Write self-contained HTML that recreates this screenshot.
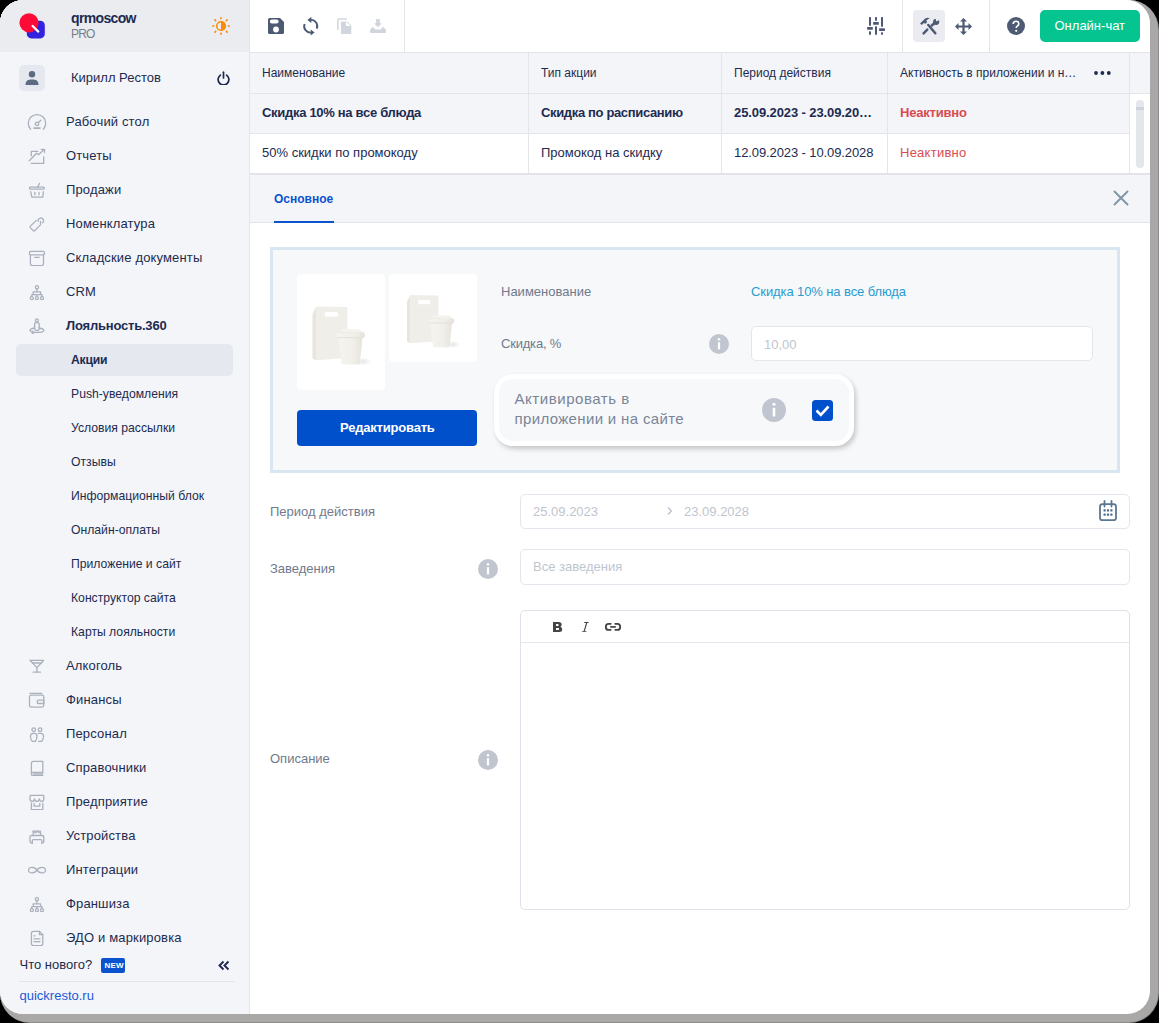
<!DOCTYPE html>
<html><head><meta charset="utf-8">
<style>
*{box-sizing:border-box;margin:0;padding:0}
html,body{width:1159px;height:1023px;overflow:hidden;background:#000;font-family:"Liberation Sans",sans-serif;color:#1c2b4f}
.abs{position:absolute}
.t{position:absolute;white-space:nowrap;line-height:1}
#shadow{position:absolute;left:0;top:0;width:1159px;height:1023px;border-radius:24px 30px 30px 30px;background:#8e8c8c}
#shadow2{position:absolute;left:0;top:0;width:1158px;height:1022px;border-radius:23px 29px 29px 29px;background:#aaa7a7}
#win{position:absolute;left:0;top:0;width:1150px;height:1014px;border-radius:23px 24px 23px 23px;overflow:hidden;background:#fff}
</style></head><body>
<div id="shadow"></div>
<div id="shadow2"></div>
<div id="win">
<div class="abs" style="left:0px;top:0px;width:249px;height:1014px;background:#f4f5f9;"></div>
<div class="abs" style="left:249px;top:0px;width:1px;height:1014px;background:#e3e5ea;"></div>
<div class="abs" style="left:0px;top:0px;width:249px;height:52px;background:#ebecf0;"></div>
<svg class="abs" style="left:17px;top:11px;" width="30" height="30" viewBox="0 0 30 30"><rect x="9.8" y="9.7" width="18" height="17.7" rx="4.5" fill="#3423de"/><circle cx="12" cy="11.8" r="9.6" fill="#ff0b38"/><line x1="15.6" y1="15" x2="21.3" y2="20.6" stroke="#fff" stroke-width="2.2" stroke-linecap="round"/></svg>
<div class="t" style="left:71px;top:11.15px;font-size:14px;font-weight:700;color:#1c2b4f;letter-spacing:-0.65px;">qrmoscow</div>
<div class="t" style="left:71px;top:27.84px;font-size:12px;color:#767d8b;letter-spacing:-0.8px;">PRO</div>
<svg class="abs" style="left:211px;top:16px;" width="20" height="20" viewBox="0 0 20 20"><g stroke="#fb8a0a" stroke-width="1.6" stroke-linecap="round"><line x1="10.00" y1="2.80" x2="10.00" y2="1.80"/><line x1="15.37" y1="4.63" x2="16.08" y2="3.92"/><line x1="17.20" y1="10.00" x2="18.20" y2="10.00"/><line x1="15.37" y1="15.37" x2="16.08" y2="16.08"/><line x1="10.00" y1="17.20" x2="10.00" y2="18.20"/><line x1="4.63" y1="15.37" x2="3.92" y2="16.08"/><line x1="2.80" y1="10.00" x2="1.80" y2="10.00"/><line x1="4.63" y1="4.63" x2="3.92" y2="3.92"/></g><circle cx="10" cy="10" r="4.3" fill="none" stroke="#fb8a0a" stroke-width="1.5"/><path d="M10 5.2 A4.8 4.8 0 0 1 10 14.8 Z" fill="#fb8a0a"/></svg>
<div class="abs" style="left:19px;top:65px;width:26px;height:26px;background:#e5e8ef;border-radius:5px;"></div>
<svg class="abs" style="left:19px;top:65px;" width="26" height="26" viewBox="0 0 26 26"><circle cx="13" cy="9.2" r="3.2" fill="#5c6a82"/><path d="M6.5 20 C6.5 15.5 9 14.5 13 14.5 C17 14.5 19.5 15.5 19.5 20 Z" fill="#5c6a82"/></svg>
<div class="t" style="left:71px;top:71.00px;font-size:13px;color:#1c2b4f;">Кирилл Рестов</div>
<svg class="abs" style="left:215px;top:69px;" width="16" height="16" viewBox="0 0 16 16"><path d="M5.4 6.1 A5.4 5.4 0 1 0 11.6 6.1" fill="none" stroke="#1c2b4f" stroke-width="1.7" stroke-linecap="round"/><line x1="8.5" y1="3.2" x2="8.5" y2="9" stroke="#1c2b4f" stroke-width="1.7" stroke-linecap="round"/></svg>
<div class="abs" style="left:16px;top:344px;width:217px;height:32px;background:#e5e8ef;border-radius:5px;"></div>
<svg class="abs" style="left:27px;top:110px;" width="20" height="20" viewBox="0 0 20 20"><g fill="none" stroke="#aab1bd" stroke-width="1.3" stroke-linecap="round" stroke-linejoin="round"><path d="M3.6 19.2 A8.7 8.7 0 1 1 16.4 19.2"/><circle cx="10" cy="13.9" r="1.7"/><line x1="11.2" y1="12.7" x2="13.8" y2="10.2"/><line x1="6.9" y1="18.1" x2="13" y2="18.1" stroke-width="1.6"/></g></svg>
<div class="t" style="left:66px;top:115.00px;font-size:13px;color:#1c2b4f;letter-spacing:0.15px;">Рабочий стол</div>
<svg class="abs" style="left:27px;top:144px;" width="20" height="20" viewBox="0 0 20 20"><g fill="none" stroke="#aab1bd" stroke-width="1.3" stroke-linecap="round" stroke-linejoin="round"><path d="M4.3 11.8 V7.4 H10.8"/><path d="M2.3 16.7 L9.6 9.2 L11.7 10.6 L17.2 5.6"/><path d="M14.3 5.3 H17.5 V8.6"/><path d="M4.3 19.4 H16.7 V13"/></g></svg>
<div class="t" style="left:66px;top:149.00px;font-size:13px;color:#1c2b4f;letter-spacing:0.15px;">Отчеты</div>
<svg class="abs" style="left:27px;top:178px;" width="20" height="20" viewBox="0 0 20 20"><g fill="none" stroke="#aab1bd" stroke-width="1.3" stroke-linecap="round" stroke-linejoin="round"><path d="M12.6 5.4 L10.5 9.2"/><rect x="2.6" y="9.2" width="14.6" height="2" rx="0.8"/><path d="M3.7 13.6 L4.9 19.2 H15.8 L16.4 13.6"/><path d="M7.9 14.3 V16.8 M12 14.3 V16.8"/></g></svg>
<div class="t" style="left:66px;top:183.00px;font-size:13px;color:#1c2b4f;letter-spacing:0.15px;">Продажи</div>
<svg class="abs" style="left:27px;top:212px;" width="20" height="20" viewBox="0 0 20 20"><g fill="none" stroke="#aab1bd" stroke-width="1.3" stroke-linecap="round" stroke-linejoin="round"><path d="M9.2 8.4 L3.2 14.4 Q2.6 15 3.2 15.6 L6.4 18.8 Q7 19.4 7.6 18.8 L13.5 12.9 V9.4"/><path d="M11.2 9.3 A2.7 2.7 0 1 1 15.6 10.8"/></g></svg>
<div class="t" style="left:66px;top:217.00px;font-size:13px;color:#1c2b4f;letter-spacing:0.15px;">Номенклатура</div>
<svg class="abs" style="left:27px;top:246px;" width="20" height="20" viewBox="0 0 20 20"><g fill="none" stroke="#aab1bd" stroke-width="1.3" stroke-linecap="round" stroke-linejoin="round"><rect x="2.5" y="5.4" width="14.9" height="3.4" rx="1"/><path d="M3.4 9 V17.6 Q3.4 19.6 5.4 19.6 H14.5 Q16.5 19.6 16.5 17.6 V9"/><path d="M7.6 11.3 H12.2"/></g></svg>
<div class="t" style="left:66px;top:251.00px;font-size:13px;color:#1c2b4f;letter-spacing:0.15px;">Складские документы</div>
<svg class="abs" style="left:27px;top:280px;" width="20" height="20" viewBox="0 0 20 20"><g fill="none" stroke="#aab1bd" stroke-width="1.3" stroke-linecap="round" stroke-linejoin="round"><circle cx="9.9" cy="7.2" r="1.6"/><path d="M9.9 8.8 V11.8"/><path d="M6.2 14.6 V11.8 H13.6 V14.6"/><path d="M4.8 16.6 V14.6 H15 V16.6 M9.9 14.6 V16.6"/><circle cx="4.8" cy="18.2" r="1.5"/><circle cx="9.9" cy="18.2" r="1.5"/><circle cx="15" cy="18.2" r="1.5"/></g></svg>
<div class="t" style="left:66px;top:285.00px;font-size:13px;color:#1c2b4f;letter-spacing:0.15px;">CRM</div>
<svg class="abs" style="left:27px;top:314px;" width="20" height="20" viewBox="0 0 20 20"><g fill="none" stroke="#aab1bd" stroke-width="1.3" stroke-linecap="round" stroke-linejoin="round"><circle cx="9.9" cy="6.3" r="1.5"/><rect x="7.6" y="8.6" width="4.6" height="7.8" rx="1.6"/><path d="M7.6 14 Q3 14.8 3 16.5 Q3 18.4 9.9 18.4 Q16.8 18.4 16.8 16.5 Q16.8 14.8 12.2 14"/><path d="M5.2 17.2 L6.8 18.5 L5.2 19.8"/></g></svg>
<div class="t" style="left:66px;top:319.00px;font-size:13px;font-weight:700;color:#1c2b4f;letter-spacing:-0.2px;">Лояльность.360</div>
<div class="t" style="left:71px;top:353.67px;font-size:12.2px;font-weight:700;color:#1c2b4f;letter-spacing:-0.25px;">Акции</div>
<div class="t" style="left:71px;top:387.67px;font-size:12.2px;color:#1c2b4f;">Push-уведомления</div>
<div class="t" style="left:71px;top:421.67px;font-size:12.2px;color:#1c2b4f;">Условия рассылки</div>
<div class="t" style="left:71px;top:455.67px;font-size:12.2px;color:#1c2b4f;">Отзывы</div>
<div class="t" style="left:71px;top:489.67px;font-size:12.2px;color:#1c2b4f;">Информационный блок</div>
<div class="t" style="left:71px;top:523.67px;font-size:12.2px;color:#1c2b4f;">Онлайн-оплаты</div>
<div class="t" style="left:71px;top:557.67px;font-size:12.2px;color:#1c2b4f;">Приложение и сайт</div>
<div class="t" style="left:71px;top:591.67px;font-size:12.2px;color:#1c2b4f;">Конструктор сайта</div>
<div class="t" style="left:71px;top:625.67px;font-size:12.2px;color:#1c2b4f;">Карты лояльности</div>
<svg class="abs" style="left:27px;top:654px;" width="20" height="20" viewBox="0 0 20 20"><g fill="none" stroke="#aab1bd" stroke-width="1.3" stroke-linecap="round" stroke-linejoin="round"><path d="M3 6.3 H16.8 L9.9 13.6 Z"/><path d="M5.4 9 H14.4"/><path d="M9.9 13.6 V18"/><path d="M6.2 18.2 H13.5"/></g></svg>
<div class="t" style="left:66px;top:659.00px;font-size:13px;color:#1c2b4f;letter-spacing:0.15px;">Алкоголь</div>
<svg class="abs" style="left:27px;top:688px;" width="20" height="20" viewBox="0 0 20 20"><g fill="none" stroke="#aab1bd" stroke-width="1.3" stroke-linecap="round" stroke-linejoin="round"><path d="M3 5.4 H14.9"/><rect x="2.5" y="7.2" width="14.3" height="11.9" rx="1.8"/><rect x="10.3" y="12.2" width="6.5" height="3.3" rx="1"/></g></svg>
<div class="t" style="left:66px;top:693.00px;font-size:13px;color:#1c2b4f;letter-spacing:0.15px;">Финансы</div>
<svg class="abs" style="left:27px;top:722px;" width="20" height="20" viewBox="0 0 20 20"><g fill="none" stroke="#aab1bd" stroke-width="1.3" stroke-linecap="round" stroke-linejoin="round"><circle cx="6.7" cy="7.7" r="1.8"/><circle cx="13.1" cy="7.7" r="1.8"/><path d="M5.2 19.3 Q3.4 17.2 3.4 14.5 Q3.4 11.3 6.2 11.3 H7.4 Q10 11.3 10 14 Q10 17.2 8.4 19.3 Z"/><path d="M11.3 11.3 H13.6 Q16.6 11.3 16.6 14.2 Q16.6 17.3 14.7 19.3 H11.6"/></g></svg>
<div class="t" style="left:66px;top:727.00px;font-size:13px;color:#1c2b4f;letter-spacing:0.15px;">Персонал</div>
<svg class="abs" style="left:27px;top:756px;" width="20" height="20" viewBox="0 0 20 20"><g fill="none" stroke="#aab1bd" stroke-width="1.3" stroke-linecap="round" stroke-linejoin="round"><path d="M4.4 17.8 V7.4 Q4.4 5.4 6.4 5.4 H15.8 V16.4 H6 Q4.4 16.4 4.4 18 Q4.4 19.6 6 19.6 H15.8"/><path d="M6.4 18 H15.8"/></g></svg>
<div class="t" style="left:66px;top:761.00px;font-size:13px;color:#1c2b4f;letter-spacing:0.15px;">Справочники</div>
<svg class="abs" style="left:27px;top:790px;" width="20" height="20" viewBox="0 0 20 20"><g fill="none" stroke="#aab1bd" stroke-width="1.3" stroke-linecap="round" stroke-linejoin="round"><path d="M3.4 5.4 H16.6 L16.9 8.5 Q16.9 11.3 14.8 11.3 Q12.5 11.3 12.3 8.8 Q12 11.3 9.9 11.3 Q7.8 11.3 7.5 8.8 Q7.2 11.3 5 11.3 Q2.9 11.3 2.9 8.5 Z"/><path d="M4.4 13.2 V19.6 H15.8 V13.2"/><path d="M7 13.5 V16.2 H12.8 V13.5"/></g></svg>
<div class="t" style="left:66px;top:795.00px;font-size:13px;color:#1c2b4f;letter-spacing:0.15px;">Предприятие</div>
<svg class="abs" style="left:27px;top:824px;" width="20" height="20" viewBox="0 0 20 20"><g fill="none" stroke="#aab1bd" stroke-width="1.3" stroke-linecap="round" stroke-linejoin="round"><path d="M6.2 10.8 V7.2 H13.5 V10.8"/><path d="M6.2 7.4 L8.5 8.6 L10.4 7.4 L12.2 8.6"/><rect x="3" y="11.5" width="13.8" height="7.4" rx="1.5"/><rect x="5.3" y="15.6" width="9.6" height="6" rx="1" fill="#f4f5f9"/></g></svg>
<div class="t" style="left:66px;top:829.00px;font-size:13px;color:#1c2b4f;letter-spacing:0.15px;">Устройства</div>
<svg class="abs" style="left:27px;top:858px;" width="20" height="20" viewBox="0 0 20 20"><g fill="none" stroke="#aab1bd" stroke-width="1.3" stroke-linecap="round" stroke-linejoin="round"><path d="M10 12.2 C8 8.8 1.5 8.3 1.5 12.2 C1.5 16 8 15.6 10 12.2 C12 8.8 18.5 8.3 18.5 12.2 C18.5 16 12 15.6 10 12.2 Z"/></g></svg>
<div class="t" style="left:66px;top:863.00px;font-size:13px;color:#1c2b4f;letter-spacing:0.15px;">Интеграции</div>
<svg class="abs" style="left:27px;top:892px;" width="20" height="20" viewBox="0 0 20 20"><g fill="none" stroke="#aab1bd" stroke-width="1.3" stroke-linecap="round" stroke-linejoin="round"><circle cx="9.9" cy="7.2" r="1.6"/><path d="M9.9 8.8 V11.8"/><path d="M6.2 14.6 V11.8 H13.6 V14.6"/><path d="M4.8 16.6 V14.6 H15 V16.6 M9.9 14.6 V16.6"/><circle cx="4.8" cy="18.2" r="1.5"/><circle cx="9.9" cy="18.2" r="1.5"/><circle cx="15" cy="18.2" r="1.5"/></g></svg>
<div class="t" style="left:66px;top:897.00px;font-size:13px;color:#1c2b4f;letter-spacing:0.15px;">Франшиза</div>
<svg class="abs" style="left:27px;top:926px;" width="20" height="20" viewBox="0 0 20 20"><g fill="none" stroke="#aab1bd" stroke-width="1.3" stroke-linecap="round" stroke-linejoin="round"><path d="M6.4 5.4 H12.5 L15.8 8.7 V17.6 Q15.8 19.6 13.8 19.6 H6.4 Q4.4 19.6 4.4 17.6 V7.4 Q4.4 5.4 6.4 5.4 Z"/><path d="M12.5 5.4 V8.7 H15.8"/><path d="M6.8 9.8 H8"/><path d="M6.8 12.8 H13"/><path d="M6.8 15.6 H13"/></g></svg>
<div class="t" style="left:66px;top:931.00px;font-size:13px;color:#1c2b4f;letter-spacing:0.15px;">ЭДО и маркировка</div>
<div class="t" style="left:19.5px;top:958.00px;font-size:13px;color:#1c2b4f;">Что нового?</div>
<div class="abs" style="left:101px;top:958px;width:24px;height:15px;background:#0b52cf;border-radius:2px;"></div>
<div class="t" style="left:104.5px;top:962.23px;font-size:8px;font-weight:700;color:#fff;letter-spacing:0.2px;">NEW</div>
<svg class="abs" style="left:217px;top:960px;" width="14" height="11" viewBox="0 0 14 11"><path d="M6.5 1.5 L2.5 5.5 L6.5 9.5 M11.5 1.5 L7.5 5.5 L11.5 9.5" fill="none" stroke="#1c2b4f" stroke-width="1.9"/></svg>
<div class="abs" style="left:19px;top:981px;width:216px;height:1px;background:#e3e5ea;"></div>
<div class="t" style="left:19.5px;top:989.00px;font-size:13px;color:#1b5bd8;">quickresto.ru</div>
<div class="abs" style="left:250px;top:0px;width:900px;height:52px;background:#fff;"></div>
<div class="abs" style="left:250px;top:52px;width:900px;height:1px;background:#e3e5ea;"></div>
<div class="abs" style="left:404px;top:0px;width:1px;height:52px;background:#e3e5ea;"></div>
<div class="abs" style="left:902px;top:0px;width:1px;height:52px;background:#e3e5ea;"></div>
<div class="abs" style="left:989px;top:0px;width:1px;height:52px;background:#e3e5ea;"></div>
<svg class="abs" style="left:268px;top:18px;" width="16" height="16" viewBox="0 0 16 16"><path d="M1.5 0 H12 L16 4 V14.5 Q16 16 14.5 16 H1.5 Q0 16 0 14.5 V1.5 Q0 0 1.5 0 Z" fill="#4d5a74"/><rect x="1.9" y="1.5" width="8.7" height="3.9" rx="1.9" fill="#fff"/><circle cx="8" cy="11.5" r="2.9" fill="#fff"/></svg>
<svg class="abs" style="left:302px;top:16px;" width="18" height="20" viewBox="0 0 18 20"><g fill="none" stroke="#4d5a74" stroke-width="1.9"><path d="M8.6 3.9 A6.3 6.3 0 0 1 14.8 12.6"/><path d="M2.6 8.0 A6.3 6.3 0 0 0 9.4 16.5"/></g><path d="M5.4 3.9 L9.3 0.8 L9.3 7 Z" fill="#4d5a74"/><path d="M12.6 16.5 L8.7 13.4 L8.7 19.6 Z" fill="#4d5a74"/></svg>
<svg class="abs" style="left:337px;top:18px;" width="16" height="16" viewBox="0 0 16 16"><path d="M0.9 12 V1.8 Q0.9 0.9 1.8 0.9 H10" fill="none" stroke="#d0d5de" stroke-width="1.5"/><path d="M5 3.4 H10.2 L14.3 7.5 V15 Q14.3 16 13.3 16 H4.9 Q3.9 16 3.9 15 V4.4 Q3.9 3.4 5 3.4 Z" fill="#d0d5de"/><path d="M9 3.4 V8 H13.6 Z" fill="#fff"/></svg>
<svg class="abs" style="left:370px;top:18px;" width="16" height="16" viewBox="0 0 16 16"><path d="M6.1 0.9 H9.8 V5.3 H11.8 L7.95 9.2 L4.1 5.3 H6.1 Z" fill="#d0d5de"/><path d="M0 12 L2.4 9.3 H3.4 L5.2 11.6 H10.8 L12.6 9.3 H13.6 L16 12 V14 Q16 15 15 15 H1 Q0 15 0 14 Z" fill="#d0d5de"/></svg>
<svg class="abs" style="left:867px;top:17px;" width="18" height="18" viewBox="0 0 18 18"><g fill="#4d5a74"><rect x="2" y="0" width="2" height="8.7" rx="0.5"/><rect x="2" y="14.2" width="2" height="3.6" rx="0.5"/><rect x="0.1" y="10" width="5.7" height="2.8" rx="0.5"/><rect x="8" y="0" width="2" height="3.8" rx="0.5"/><rect x="8" y="9.2" width="2" height="8.6" rx="0.5"/><rect x="6.1" y="5.1" width="5.7" height="2.7" rx="0.5"/><rect x="14" y="0" width="2" height="9.8" rx="0.5"/><rect x="14" y="15.3" width="2" height="2.5" rx="0.5"/><rect x="12.1" y="11.2" width="5.8" height="2.7" rx="0.5"/></g></svg>
<div class="abs" style="left:913px;top:10px;width:32px;height:32px;background:#ebecf1;border-radius:4px;"></div>
<svg class="abs" style="left:919px;top:17px;" width="22" height="19" viewBox="0 0 22 19"><defs><mask id="wm"><rect x="0" y="0" width="22" height="19" fill="#fff"/><path d="M17.3 4.6 L16.2 0 L20.5 0 L21.5 2.5 Z" fill="#000"/></mask></defs><g fill="#4d5a74"><path d="M1.1 6.6 L2.7 8 L4.8 6.1 L6.6 6.7 L8.1 5 L7.2 3.8 Q9 2 10.8 1.3 Q8.5 0.3 6.2 1.5 Z"/><circle cx="17.2" cy="4.8" r="3.1" mask="url(#wm)"/></g><g stroke="#4d5a74" stroke-width="2.5" stroke-linecap="round"><line x1="9.3" y1="8" x2="16.3" y2="16.3"/><line x1="8.3" y1="12.6" x2="4.6" y2="16.4"/><line x1="12.8" y1="8.5" x2="16.2" y2="5.5"/></g></svg>
<svg class="abs" style="left:955px;top:18px;" width="17" height="17" viewBox="0 0 17 17"><g fill="#4d5a74"><path d="M8.5 0 L12 3.5 H9.6 V7.4 H13.5 V5 L17 8.5 L13.5 12 V9.6 H9.6 V13.5 H12 L8.5 17 L5 13.5 H7.4 V9.6 H3.5 V12 L0 8.5 L3.5 5 V7.4 H7.4 V3.5 H5 Z"/></g></svg>
<svg class="abs" style="left:1007px;top:17px;" width="18" height="18" viewBox="0 0 18 18"><circle cx="9" cy="9" r="9" fill="#4f5b75"/><path d="M6.2 7 Q6.2 4.2 9 4.2 Q11.8 4.2 11.8 6.8 Q11.8 8.2 10.4 9 Q9.2 9.7 9.2 11" fill="none" stroke="#fff" stroke-width="1.6"/><circle cx="9.2" cy="13.8" r="1.1" fill="#fff"/></svg>
<div class="abs" style="left:1040px;top:10px;width:100px;height:32px;background:#06c48f;border-radius:5px;"></div>
<div class="t" style="left:1054.5px;top:19.00px;font-size:13px;color:#fff;">Онлайн-чат</div>
<div class="abs" style="left:250px;top:53px;width:900px;height:40px;background:#f4f5f9;"></div>
<div class="abs" style="left:250px;top:93px;width:900px;height:1px;background:#e3e5ea;"></div>
<div class="abs" style="left:250px;top:94px;width:879px;height:39px;background:#f4f5f9;"></div>
<div class="abs" style="left:250px;top:133px;width:879px;height:1px;background:#e3e5ea;"></div>
<div class="abs" style="left:250px;top:134px;width:879px;height:39px;background:#fff;"></div>
<div class="abs" style="left:1129px;top:94px;width:21px;height:79px;background:#fff;"></div>
<div class="abs" style="left:250px;top:173px;width:900px;height:2px;background:#e3e4e8;"></div>
<div class="abs" style="left:528px;top:53px;width:1px;height:120px;background:#e3e5ea;"></div>
<div class="abs" style="left:721px;top:53px;width:1px;height:120px;background:#e3e5ea;"></div>
<div class="abs" style="left:887px;top:53px;width:1px;height:120px;background:#e3e5ea;"></div>
<div class="abs" style="left:1129px;top:53px;width:1px;height:120px;background:#e3e5ea;"></div>
<div class="t" style="left:262px;top:66.84px;font-size:12px;color:#1c2b4f;">Наименование</div>
<div class="t" style="left:541px;top:66.84px;font-size:12px;color:#1c2b4f;">Тип акции</div>
<div class="t" style="left:734px;top:66.84px;font-size:12px;color:#1c2b4f;">Период действия</div>
<div class="t" style="left:900px;top:66.84px;font-size:12px;color:#1c2b4f;">Активность в приложении и н…</div>
<svg class="abs" style="left:1094px;top:69px;" width="18" height="8" viewBox="0 0 18 8"><g fill="#1c2b4f"><circle cx="2" cy="4" r="1.9"/><circle cx="8.4" cy="4" r="1.9"/><circle cx="14.8" cy="4" r="1.9"/></g></svg>
<div class="abs" style="left:1136px;top:100px;width:8px;height:68px;background:#e3e6eb;border-radius:4px;"></div>
<div class="abs" style="left:1136px;top:107px;width:8px;height:3px;background:#cfd2d8;"></div>
<div class="t" style="left:262px;top:106.00px;font-size:13px;font-weight:700;color:#1c2b4f;letter-spacing:-0.3px;">Скидка 10% на все блюда</div>
<div class="t" style="left:541px;top:106.00px;font-size:13px;font-weight:700;color:#1c2b4f;letter-spacing:-0.35px;">Скидка по расписанию</div>
<div class="t" style="left:734px;top:106.00px;font-size:13px;font-weight:700;color:#1c2b4f;letter-spacing:-0.1px;">25.09.2023 - 23.09.20…</div>
<div class="t" style="left:900px;top:106.00px;font-size:13px;font-weight:700;color:#d84b51;letter-spacing:-0.2px;">Неактивно</div>
<div class="t" style="left:262px;top:146.00px;font-size:13px;color:#1c2b4f;">50% скидки по промокоду</div>
<div class="t" style="left:541px;top:146.00px;font-size:13px;color:#1c2b4f;">Промокод на скидку</div>
<div class="t" style="left:734px;top:146.00px;font-size:13px;color:#1c2b4f;letter-spacing:-0.1px;">12.09.2023 - 10.09.2028</div>
<div class="t" style="left:900px;top:146.00px;font-size:13px;color:#d84b51;letter-spacing:0.25px;">Неактивно</div>
<div class="abs" style="left:250px;top:175px;width:900px;height:47px;background:#f4f5f9;"></div>
<div class="abs" style="left:250px;top:222px;width:900px;height:1px;background:#e3e5ea;"></div>
<div class="t" style="left:274px;top:192.84px;font-size:12px;font-weight:700;color:#0b52cf;">Основное</div>
<div class="abs" style="left:274px;top:221px;width:60px;height:2px;background:#0b52cf;"></div>
<svg class="abs" style="left:1113px;top:190px;" width="16" height="16" viewBox="0 0 16 16"><path d="M1.5 1.5 L14.5 14.5 M14.5 1.5 L1.5 14.5" stroke="#7e95a6" stroke-width="1.9" stroke-linecap="round"/></svg>
<div class="abs" style="left:270px;top:247px;width:850px;height:226px;background:#f6f8fa;border:3px solid #d9e6f1;"></div>
<div class="abs" style="left:297px;top:274px;width:88px;height:116px;background:#fff;border-radius:4px;"></div>
<div class="abs" style="left:389px;top:274px;width:88px;height:88px;background:#fff;border-radius:4px;"></div>
<svg class="abs" style="left:297px;top:274px;" width="88" height="116" viewBox="0 0 88 116"><defs><linearGradient id="cga" x1="0" x2="1" y1="0" y2="0"><stop offset="0" stop-color="#f6f4ef"/><stop offset="0.6" stop-color="#f1efe9"/><stop offset="1" stop-color="#e6e3db"/></linearGradient><radialGradient id="sga"><stop offset="0" stop-color="#000" stop-opacity="0.1"/><stop offset="1" stop-color="#000" stop-opacity="0"/></radialGradient></defs><g transform="translate(0,0)"><ellipse cx="66" cy="87.5" rx="9" ry="4" fill="url(#sga)"/><path d="M15.5 40 L19 33 L19 86.2 L15.5 84.5 Z" fill="#e8e5dd"/><path d="M19 32.5 L50.4 33 L50.4 84 L19 86.2 Z" fill="#f0eee8"/><rect x="27.5" y="38" width="14" height="4.8" rx="2.4" fill="#fff"/><path d="M41.5 63.5 L65.5 63.5 L62.8 89.5 Q62.6 90.5 61.5 90.5 H45.6 Q44.5 90.5 44.3 89.5 Z" fill="url(#cga)"/><rect x="39.8" y="58.3" width="28.1" height="5.6" rx="2.2" fill="url(#cga)"/><path d="M42.5 58.5 Q43 55.3 46 55.3 H61.5 Q64.5 55.3 65 58.5 Z" fill="#f5f3ee"/><line x1="40.5" y1="63.6" x2="67" y2="63.6" stroke="#e2dfd7" stroke-width="0.9"/><line x1="41" y1="58.5" x2="66.5" y2="58.5" stroke="#ebe8e1" stroke-width="0.6"/></g></svg>
<svg class="abs" style="left:389px;top:274px;" width="88" height="88" viewBox="0 0 88 88"><defs><linearGradient id="cgb" x1="0" x2="1" y1="0" y2="0"><stop offset="0" stop-color="#f6f4ef"/><stop offset="0.6" stop-color="#f1efe9"/><stop offset="1" stop-color="#e6e3db"/></linearGradient><radialGradient id="sgb"><stop offset="0" stop-color="#000" stop-opacity="0.1"/><stop offset="1" stop-color="#000" stop-opacity="0"/></radialGradient></defs><g transform="translate(4.05,-8.25) scale(0.9)"><ellipse cx="66" cy="87.5" rx="9" ry="4" fill="url(#sgb)"/><path d="M15.5 40 L19 33 L19 86.2 L15.5 84.5 Z" fill="#e8e5dd"/><path d="M19 32.5 L50.4 33 L50.4 84 L19 86.2 Z" fill="#f0eee8"/><rect x="27.5" y="38" width="14" height="4.8" rx="2.4" fill="#fff"/><path d="M41.5 63.5 L65.5 63.5 L62.8 89.5 Q62.6 90.5 61.5 90.5 H45.6 Q44.5 90.5 44.3 89.5 Z" fill="url(#cgb)"/><rect x="39.8" y="58.3" width="28.1" height="5.6" rx="2.2" fill="url(#cgb)"/><path d="M42.5 58.5 Q43 55.3 46 55.3 H61.5 Q64.5 55.3 65 58.5 Z" fill="#f5f3ee"/><line x1="40.5" y1="63.6" x2="67" y2="63.6" stroke="#e2dfd7" stroke-width="0.9"/><line x1="41" y1="58.5" x2="66.5" y2="58.5" stroke="#ebe8e1" stroke-width="0.6"/></g></svg>
<div class="abs" style="left:297px;top:410px;width:180px;height:36px;background:#0050cc;border-radius:4px;"></div>
<div class="t" style="left:340px;top:421.00px;font-size:13px;font-weight:700;color:#fff;letter-spacing:-0.2px;">Редактировать</div>
<div class="t" style="left:501px;top:285.00px;font-size:13px;color:#6f7a8d;">Наименование</div>
<div class="t" style="left:751px;top:285.00px;font-size:13px;color:#2a9bd0;letter-spacing:-0.1px;">Скидка 10% на все блюда</div>
<div class="t" style="left:501px;top:337.00px;font-size:13px;color:#6f7a8d;letter-spacing:-0.2px;">Скидка, %</div>
<svg class="abs" style="left:709px;top:334px;" width="20" height="20" viewBox="0 0 20 20"><circle cx="10" cy="10" r="10" fill="#c0c5d0"/><rect x="8.90" y="8.20" width="2.20" height="7.20" fill="#fff"/><circle cx="10" cy="5.20" r="1.30" fill="#fff"/></svg>
<div class="abs" style="left:751px;top:326px;width:342px;height:35px;background:#fff;border:1px solid #e3e6ec;border-radius:5px;"></div>
<div class="t" style="left:764px;top:338.00px;font-size:13px;color:#bfc5cf;">10,00</div>
<div class="abs" style="left:494px;top:374px;width:360px;height:72px;background:#f6f8fa;border:5px solid #fff;border-radius:19px;box-shadow:2px 3px 5px rgba(0,0,0,0.2);"></div>
<div class="t" style="left:514.5px;top:391.30px;font-size:15px;color:#7a8597;letter-spacing:0.55px;">Активировать в</div>
<div class="t" style="left:514.5px;top:411.30px;font-size:15px;color:#7a8597;letter-spacing:0.35px;">приложении и на сайте</div>
<svg class="abs" style="left:762px;top:398px;" width="24" height="24" viewBox="0 0 24 24"><circle cx="12" cy="12" r="12" fill="#c0c5d0"/><rect x="10.68" y="9.84" width="2.64" height="8.64" fill="#fff"/><circle cx="12" cy="6.24" r="1.56" fill="#fff"/></svg>
<svg class="abs" style="left:812px;top:400px;" width="21" height="21" viewBox="0 0 21 21"><rect x="0" y="0" width="21" height="21" rx="3.5" fill="#0050cc"/><path d="M4.5 10.5 L8.8 14.8 L16.5 6.5" fill="none" stroke="#fff" stroke-width="2.6"/></svg>
<div class="t" style="left:270px;top:504.50px;font-size:13px;color:#6f7a8d;">Период действия</div>
<div class="abs" style="left:520px;top:494px;width:610px;height:35px;background:#fff;border:1px solid #e3e6ec;border-radius:5px;"></div>
<div class="t" style="left:533px;top:505.00px;font-size:13px;color:#bfc5cf;">25.09.2023</div>
<svg class="abs" style="left:666px;top:506px;" width="8" height="10" viewBox="0 0 8 10"><path d="M2 1.5 L5.5 5 L2 8.5" fill="none" stroke="#b8bfca" stroke-width="1.2"/></svg>
<div class="t" style="left:684px;top:505.00px;font-size:13px;color:#bfc5cf;">23.09.2028</div>
<svg class="abs" style="left:1098px;top:500px;" width="20" height="22" viewBox="0 0 20 22"><rect x="2" y="4.2" width="16" height="16" rx="2.5" fill="none" stroke="#5b7891" stroke-width="1.8"/><line x1="6.5" y1="1" x2="6.5" y2="6.5" stroke="#5b7891" stroke-width="1.8" stroke-linecap="round"/><line x1="13.5" y1="1" x2="13.5" y2="6.5" stroke="#5b7891" stroke-width="1.8" stroke-linecap="round"/><g fill="#4f6d86"><rect x="5.5" y="9.2" width="2.2" height="2.2" rx="0.5"/><rect x="8.9" y="9.2" width="2.2" height="2.2" rx="0.5"/><rect x="12.3" y="9.2" width="2.2" height="2.2" rx="0.5"/><rect x="5.5" y="13.6" width="2.2" height="2.2" rx="0.5"/><rect x="8.9" y="13.6" width="2.2" height="2.2" rx="0.5"/><rect x="12.3" y="13.6" width="2.2" height="2.2" rx="0.5"/></g></svg>
<div class="t" style="left:270px;top:562.00px;font-size:13px;color:#6f7a8d;">Заведения</div>
<svg class="abs" style="left:478px;top:558.5px;" width="20" height="20" viewBox="0 0 20 20"><circle cx="10" cy="10" r="10" fill="#c0c5d0"/><rect x="8.90" y="8.20" width="2.20" height="7.20" fill="#fff"/><circle cx="10" cy="5.20" r="1.30" fill="#fff"/></svg>
<div class="abs" style="left:520px;top:549px;width:610px;height:36px;background:#fff;border:1px solid #e3e6ec;border-radius:5px;"></div>
<div class="t" style="left:533px;top:560.00px;font-size:13px;color:#bfc5cf;">Все заведения</div>
<div class="abs" style="left:520px;top:610px;width:610px;height:300px;background:#fff;border:1px solid #dde2ea;border-radius:5px;"></div>
<div class="abs" style="left:521px;top:642px;width:608px;height:1px;background:#e3e6ec;"></div>
<svg class="abs" style="left:553px;top:622px;" width="10" height="10" viewBox="0 0 10 10"><path fill-rule="evenodd" fill="#444" d="M0 0 H5.6 Q8.7 0 8.7 2.6 Q8.7 4.1 7.4 4.8 Q9.2 5.5 9.2 7.5 Q9.2 10 6.1 10 H0 Z M3 1.9 V4 H5.1 Q5.6 4 5.6 3 Q5.6 1.9 5.1 1.9 Z M3 5.9 V8.1 H5.5 Q6.1 8.1 6.1 7 Q6.1 5.9 5.5 5.9 Z"/></svg>
<svg class="abs" style="left:581px;top:621px;" width="9" height="12" viewBox="0 0 9 12"><g fill="#444"><path d="M3.3 1 H7.6 L7.4 1.9 H3.1 Z"/><path d="M1.2 10.2 H5.5 L5.3 11.1 H1 Z"/><path d="M5.2 1.5 H6.4 L3.7 10.6 H2.5 Z"/></g></svg>
<svg class="abs" style="left:604px;top:622px;" width="18" height="10" viewBox="0 0 18 10"><g fill="none" stroke="#444" stroke-width="1.8"><path d="M7.4 1.9 H4.6 Q1.8 1.9 1.8 4.9 Q1.8 7.9 4.6 7.9 H7.4"/><path d="M10.6 1.9 H13.4 Q16.2 1.9 16.2 4.9 Q16.2 7.9 13.4 7.9 H10.6"/></g><path d="M6.2 4.9 H11.8" stroke="#444" stroke-width="1.7"/></svg>
<div class="t" style="left:270px;top:752.00px;font-size:13px;color:#6f7a8d;">Описание</div>
<svg class="abs" style="left:478px;top:749.5px;" width="20" height="20" viewBox="0 0 20 20"><circle cx="10" cy="10" r="10" fill="#c0c5d0"/><rect x="8.90" y="8.20" width="2.20" height="7.20" fill="#fff"/><circle cx="10" cy="5.20" r="1.30" fill="#fff"/></svg>
</div>
</body></html>
